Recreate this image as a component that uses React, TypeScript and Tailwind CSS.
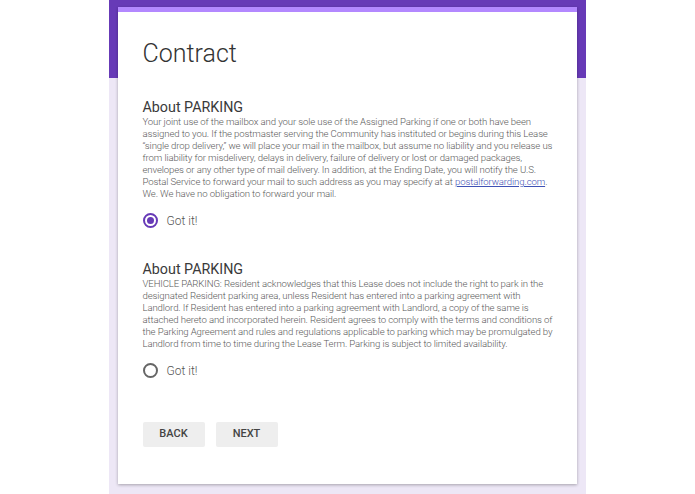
import React from "react";

function Radio({ checked }: { checked: boolean }) {
  return (
    <span
      className={
        "flex h-[15px] w-[15px] items-center justify-center rounded-full border-2 " +
        (checked ? "border-[#673ab7]" : "border-[#666666]")
      }
    >
      {checked ? <span className="h-[7px] w-[7px] rounded-full bg-[#673ab7]" /> : null}
    </span>
  );
}

function Lines({ lines }: { lines: React.ReactNode[] }) {
  return (
    <p className="text-[9.6px] font-light leading-[12px] tracking-[-0.12px] text-[#5a5a5a]">
      {lines.map((l, i) => (
        <span key={i} className="block whitespace-nowrap">
          {l}
        </span>
      ))}
    </p>
  );
}

export default function App() {
  return (
    <div className="flex h-[494px] w-[695px] justify-center bg-white font-['Roboto',sans-serif]">
      <div className="relative ml-[-1px] flex h-full w-[477px] flex-col bg-[linear-gradient(to_bottom,#673ab7_0px,#673ab7_78px,#ede7f6_78px,#ede7f6_100%)] px-[9px] pt-[7px]">
        <div className="h-[477px] border-t-[5px] border-[#b388ff] bg-white pl-[25px] pr-[19px] shadow-[0_1px_3px_rgba(0,0,0,0.3)]">
          <h1 className="mt-[26px] text-[25px] font-light leading-[32px] text-[#333333]">Contract</h1>

          <h2 className="mt-[28px] text-[14.3px] font-normal leading-[18px] text-[#3a3a3a]">About PARKING</h2>
          <Lines
            lines={[
              "Your joint use of the mailbox and your sole use of the Assigned Parking if one or both have been",
              "assigned to you. If the postmaster serving the Community has instituted or begins during this Lease",
              "“single drop delivery,” we will place your mail in the mailbox, but assume no liability and you release us",
              "from liability for misdelivery, delays in delivery, failure of delivery or lost or damaged packages,",
              "envelopes or any other type of mail delivery. In addition, at the Ending Date, you will notify the U.S.",
              <>
                Postal Service to forward your mail to such address as you may specify at at{" "}
                <a className="text-[#3f51b5] underline">postalforwarding.com</a>.
              </>,
              "We. We have no obligation to forward your mail.",
            ]}
          />
          <label className="mt-[13px] flex items-center gap-[9px]">
            <Radio checked={true} />
            <span className="text-[12px] font-light leading-[14px] text-[#555555]">Got it!</span>
          </label>

          <h2 className="mt-[32px] text-[14.3px] font-normal leading-[18px] text-[#3a3a3a]">About PARKING</h2>
          <Lines
            lines={[
              "VEHICLE PARKING: Resident acknowledges that this Lease does not include the right to park in the",
              "designated Resident parking area, unless Resident has entered into a parking agreement with",
              "Landlord. If Resident has entered into a parking agreement with Landlord, a copy of the same is",
              "attached hereto and incorporated herein. Resident agrees to comply with the terms and conditions of",
              "the Parking Agreement and rules and regulations applicable to parking which may be promulgated by",
              "Landlord from time to time during the Lease Term. Parking is subject to limited availability.",
            ]}
          />
          <label className="mt-[13px] flex items-center gap-[9px]">
            <Radio checked={false} />
            <span className="text-[12px] font-light leading-[14px] text-[#555555]">Got it!</span>
          </label>

          <div className="mt-[44px] flex gap-[11px]">
            <button className="h-[25px] w-[62px] rounded-[2px] bg-[#eeeeee] text-[11px] font-medium text-[#444444]">BACK</button>
            <button className="h-[25px] w-[62px] rounded-[2px] bg-[#eeeeee] text-[11px] font-medium text-[#444444]">NEXT</button>
          </div>
        </div>
      </div>
    </div>
  );
}
